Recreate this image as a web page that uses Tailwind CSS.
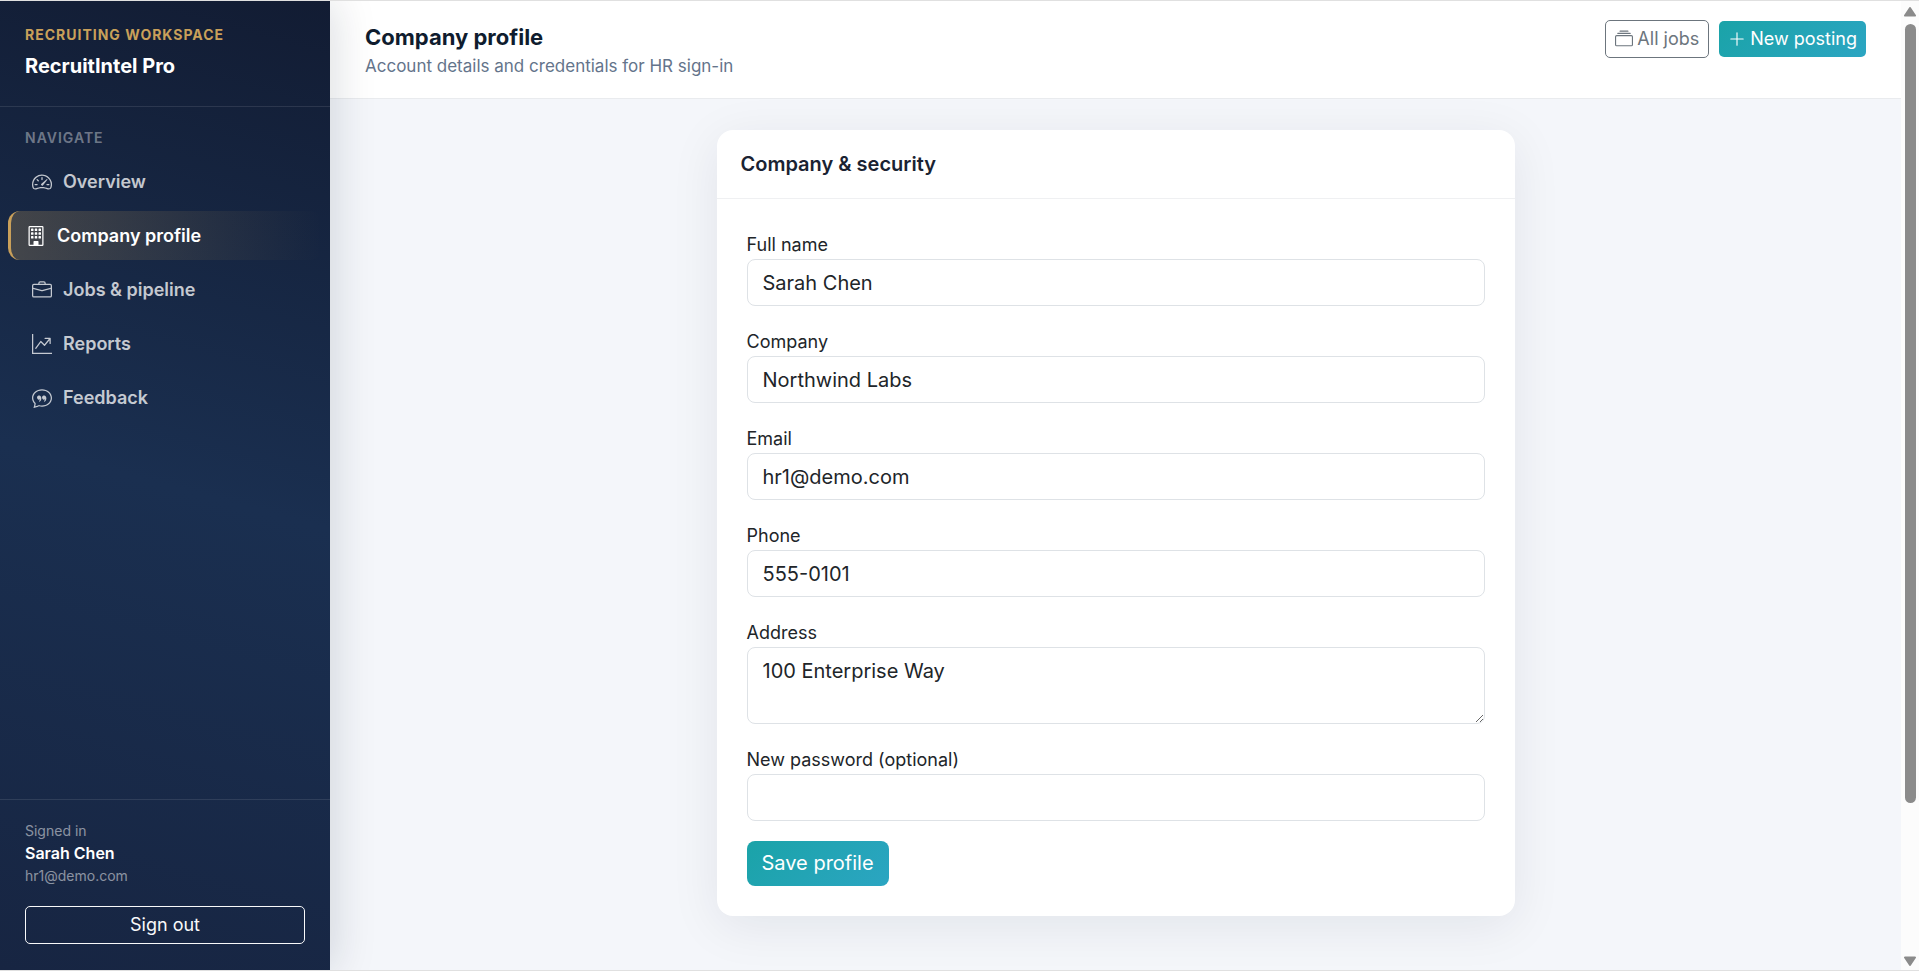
<!DOCTYPE html>
<html lang="en">
<head>
<meta charset="utf-8">
<title>Company profile - RecruitIntel Pro</title>
<meta name="viewport" content="width=device-width, initial-scale=1">
<script src="https://cdn.jsdelivr.net/npm/@tailwindcss/browser@4"></script>
</head>
<body class="flex min-h-screen border-y border-[#e0e0e0] bg-[#f4f6fa] font-['Inter',sans-serif] text-xl text-[#212529]">

<aside class="relative z-10 flex w-[330px] shrink-0 flex-col bg-[linear-gradient(195deg,#121c33_0%,#1a2f50_50%,#172542_100%)] text-white shadow-[4px_0_40px_rgba(15,28,46,0.15)]">
  <div class="border-b border-white/10 px-[25px] pt-[23px] pb-[27px]">
    <p class="text-sm leading-[22px] font-bold tracking-[1px] text-[#c9a05a]">RECRUITING WORKSPACE</p>
    <p class="pt-[7px] text-xl leading-[26px] font-bold">RecruitIntel Pro</p>
  </div>
  <nav class="flex-1 pt-5">
    <p class="px-[25px] pb-[9px] text-sm leading-[21px] font-semibold tracking-[1px] text-white/40">NAVIGATE</p>
    <ul class="flex flex-col gap-[5px] px-2 text-lg font-semibold text-white/75">
      <li><a href="#" class="flex items-center gap-[11px] px-6 py-[10px] leading-[29px]">
        <svg class="size-5" viewBox="0 0 16 16" fill="currentColor"><path d="M8 4a.5.5 0 0 1 .5.5V6a.5.5 0 0 1-1 0V4.5A.5.5 0 0 1 8 4M3.732 5.732a.5.5 0 0 1 .707 0l.915.914a.5.5 0 1 1-.708.708l-.914-.915a.5.5 0 0 1 0-.707M2 10a.5.5 0 0 1 .5-.5h1.586a.5.5 0 0 1 0 1H2.5A.5.5 0 0 1 2 10m9.5 0a.5.5 0 0 1 .5-.5h1.5a.5.5 0 0 1 0 1H12a.5.5 0 0 1-.5-.5m.754-4.246a.39.39 0 0 0-.527-.02L7.547 9.31a.91.91 0 1 0 1.302 1.258l3.434-4.297a.39.39 0 0 0-.029-.518z"/><path fill-rule="evenodd" d="M0 10a8 8 0 1 1 15.547 2.661c-.442 1.253-1.845 1.602-2.932 1.25C11.309 13.488 9.475 13 8 13c-1.474 0-3.31.488-4.615.911-1.087.352-2.49.003-2.932-1.25A8 8 0 0 1 0 10m8-7a7 7 0 0 0-6.603 9.329c.203.575.923.876 1.68.63C4.397 12.533 6.358 12 8 12s3.604.532 4.923.96c.757.245 1.477-.056 1.68-.631A7 7 0 0 0 8 3"/></svg>
        Overview</a></li>
      <li><a href="#" aria-current="page" class="flex items-center gap-[11px] rounded-xl border-l-3 border-[#c9a05a] bg-linear-to-r from-[#c9a05a]/25 to-transparent px-[15px] py-[10px] leading-[29px] text-white">
        <svg class="size-5" viewBox="0 0 16 16" fill="currentColor"><path d="M4 2.500a.5.5 0 0 1 .5-.5h1a.5.5 0 0 1 .5.5v1a.5.5 0 0 1-.5.5h-1a.5.5 0 0 1-.5-.5zm3 0a.5.5 0 0 1 .5-.5h1a.5.5 0 0 1 .5.5v1a.5.5 0 0 1-.5.5h-1a.5.5 0 0 1-.5-.5zm3.500-.5a.5.5 0 0 0-.5.5v1a.5.5 0 0 0 .5.5h1a.5.5 0 0 0 .5-.5v-1a.5.5 0 0 0-.5-.5zM4 5.500a.5.5 0 0 1 .5-.5h1a.5.5 0 0 1 .5.5v1a.5.5 0 0 1-.5.5h-1a.5.5 0 0 1-.5-.5zM7.500 5a.5.5 0 0 0-.5.5v1a.5.5 0 0 0 .5.5h1a.5.5 0 0 0 .5-.5v-1a.5.5 0 0 0-.5-.5zm2.500.5a.5.5 0 0 1 .5-.5h1a.5.5 0 0 1 .5.5v1a.5.5 0 0 1-.5.5h-1a.5.5 0 0 1-.5-.5zM4.500 8a.5.5 0 0 0-.5.5v1a.5.5 0 0 0 .5.5h1a.5.5 0 0 0 .5-.5v-1a.5.5 0 0 0-.5-.5zm2.500.5a.5.5 0 0 1 .5-.5h1a.5.5 0 0 1 .5.5v1a.5.5 0 0 1-.5.5h-1a.5.5 0 0 1-.5-.5zm3.500-.5a.5.5 0 0 0-.5.5v1a.5.5 0 0 0 .5.5h1a.5.5 0 0 0 .5-.5v-1a.5.5 0 0 0-.5-.5z"/><path d="M2 1a1 1 0 0 1 1-1h10a1 1 0 0 1 1 1v14a1 1 0 0 1-1 1H3a1 1 0 0 1-1-1zm11 0H3v14h3v-2.500a.5.5 0 0 1 .5-.5h3a.5.5 0 0 1 .5.5V15h3z"/></svg>
        Company profile</a></li>
      <li><a href="#" class="flex items-center gap-[11px] px-6 py-[10px] leading-[29px]">
        <svg class="size-5" viewBox="0 0 16 16" fill="currentColor"><path d="M6.500 1A1.500 1.500 0 0 0 5 2.500V3H1.500A1.500 1.500 0 0 0 0 4.500v8A1.500 1.500 0 0 0 1.500 14h13a1.500 1.500 0 0 0 1.500-1.500v-8A1.500 1.500 0 0 0 14.500 3H11v-.5A1.500 1.500 0 0 0 9.500 1zm0 1h3a.5.5 0 0 1 .5.5V3H6v-.5a.5.5 0 0 1 .5-.5m1.886 6.914L15 7.151V12.500a.5.5 0 0 1-.5.5h-13a.5.5 0 0 1-.5-.5V7.150l6.614 1.764a1.500 1.500 0 0 0 .772 0M1.500 4h13a.5.5 0 0 1 .5.5v1.616L8.129 7.948a.5.5 0 0 1-.258 0L1 6.116V4.500a.5.5 0 0 1 .5-.5"/></svg>
        Jobs &amp; pipeline</a></li>
      <li><a href="#" class="flex items-center gap-[11px] px-6 py-[10px] leading-[29px]">
        <svg class="size-5" viewBox="0 0 16 16" fill="currentColor"><path fill-rule="evenodd" d="M0 0h1v15h15v1H0zm10 3.500a.5.5 0 0 1 .5-.5h4a.5.5 0 0 1 .5.5v4a.5.5 0 0 1-1 0V4.900l-3.613 4.417a.5.5 0 0 1-.74.037L7.060 6.767l-3.656 5.027a.5.5 0 0 1-.808-.588l4-5.500a.5.5 0 0 1 .758-.06l2.609 2.610L13.445 4H10.500a.5.5 0 0 1-.5-.5"/></svg>
        Reports</a></li>
      <li><a href="#" class="flex items-center gap-[11px] px-6 py-[10px] leading-[29px]">
        <svg class="size-5" viewBox="0 0 16 16" fill="currentColor"><path d="M2.678 11.894a1 1 0 0 1 .287.801 11 11 0 0 1-.398 2c1.395-.323 2.247-.697 2.634-.893a1 1 0 0 1 .71-.074A8 8 0 0 0 8 14c3.996 0 7-2.807 7-6s-3.004-6-7-6-7 2.808-7 6c0 1.468.617 2.830 1.678 3.894m-.493 3.905a22 22 0 0 1-.713.129c-.2.032-.352-.176-.273-.362a10 10 0 0 0 .244-.637l.003-.01c.248-.72.45-1.548.524-2.319C.743 11.370 0 9.760 0 8c0-3.866 3.582-7 8-7s8 3.134 8 7-3.582 7-8 7a9 9 0 0 1-2.347-.306c-.52.263-1.639.742-3.468 1.105"/><path d="M7.066 6.760A1.665 1.665 0 0 0 4 7.668a1.667 1.667 0 0 0 2.561 1.406c-.131.389-.375.804-.777 1.220a.417.417 0 0 0 .6.58c1.486-1.540 1.293-3.214.682-4.112zm4 0A1.665 1.665 0 0 0 8 7.668a1.667 1.667 0 0 0 2.561 1.406c-.131.389-.375.804-.777 1.220a.417.417 0 0 0 .6.58c1.486-1.540 1.293-3.214.682-4.112z"/></svg>
        Feedback</a></li>
    </ul>
  </nav>
  <div class="border-t border-white/10 px-[25px] pt-5 pb-[26px]">
    <p class="text-sm leading-[22px] text-white/50">Signed in</p>
    <p class="text-base leading-[23px] font-semibold">Sarah Chen</p>
    <p class="text-sm leading-[22px] text-white/50">hr1@demo.com</p>
    <button type="button" class="mt-[19px] w-full rounded-[5px] border border-[#f8f9fa] py-[5px] text-lg leading-[26px] text-[#f8f9fa]">Sign out</button>
  </div>
</aside>

<div class="flex min-w-0 flex-1 flex-col">
  <header class="flex items-start justify-between gap-4 border-b border-[#e9ebee] bg-white px-[35px] pt-[19px] pb-[19px]">
    <div>
      <h1 class="text-[22px] leading-[34px] font-bold text-[#0f1c2e]">Company profile</h1>
      <p class="text-[17px] leading-[25px] text-[#64748b]">Account details and credentials for HR sign-in</p>
    </div>
    <div class="flex items-center gap-[10px]">
      <a href="#" class="flex items-center gap-1 rounded-[5px] border border-[#6c757d] px-[9px] py-[5px] text-lg leading-[26px] text-[#6c757d]">
        <svg class="size-[18px]" viewBox="0 0 16 16" fill="currentColor"><path d="M2.500 3.500a.5.5 0 0 1 0-1h11a.5.5 0 0 1 0 1zm2-2a.5.5 0 0 1 0-1h7a.5.5 0 0 1 0 1zM0 13a1.500 1.500 0 0 0 1.500 1.500h13A1.500 1.500 0 0 0 16 13V6a1.500 1.500 0 0 0-1.500-1.500h-13A1.500 1.500 0 0 0 0 6zm1.500.5A.5.5 0 0 1 1 13V6a.5.5 0 0 1 .5-.5h13a.5.5 0 0 1 .5.5v7a.5.5 0 0 1-.5.5z"/></svg>
        All jobs</a>
      <a href="#" class="flex items-center gap-1 rounded-[5px] bg-linear-135 from-[#1aa3a8] to-[#2ba5c2] px-[9px] py-[5px] text-lg leading-[26px] text-white">
        <svg class="size-[18px]" viewBox="0 0 16 16" fill="currentColor"><path fill-rule="evenodd" d="M8 2a.5.5 0 0 1 .5.5v5h5a.5.5 0 0 1 0 1h-5v5a.5.5 0 0 1-1 0v-5h-5a.5.5 0 0 1 0-1h5v-5A.5.5 0 0 1 8 2"/></svg>
        New posting</a>
    </div>
  </header>
  <main class="px-[35px] py-[31px]">
    <section class="mx-auto max-w-[798px] rounded-2xl bg-white shadow-[0_10px_50px_rgba(15,28,46,0.08)]">
      <h2 class="border-b border-[#eff0f2] px-6 py-5 text-xl leading-7 font-semibold text-[#1a2332]">Company &amp; security</h2>
      <form class="flex flex-col items-start gap-5 p-[30px]">
        <div class="flex w-full flex-col">
          <label for="name" class="pt-0.5 text-lg leading-7">Full name</label>
          <input id="name" type="text" value="Sarah Chen" class="w-full rounded-lg border border-[#dee2e6] bg-white px-[15px] pt-[9px] pb-[7px] leading-[29px]">
        </div>
        <div class="flex w-full flex-col">
          <label for="company" class="pt-0.5 text-lg leading-7">Company</label>
          <input id="company" type="text" value="Northwind Labs" class="w-full rounded-lg border border-[#dee2e6] bg-white px-[15px] pt-[9px] pb-[7px] leading-[29px]">
        </div>
        <div class="flex w-full flex-col">
          <label for="email" class="pt-0.5 text-lg leading-7">Email</label>
          <input id="email" type="email" value="hr1@demo.com" class="w-full rounded-lg border border-[#dee2e6] bg-white px-[15px] pt-[9px] pb-[7px] leading-[29px]">
        </div>
        <div class="flex w-full flex-col">
          <label for="phone" class="pt-0.5 text-lg leading-7">Phone</label>
          <input id="phone" type="tel" value="555-0101" class="w-full rounded-lg border border-[#dee2e6] bg-white px-[15px] pt-[9px] pb-[7px] leading-[29px]">
        </div>
        <div class="flex w-full flex-col">
          <label for="address" class="pt-0.5 text-lg leading-7">Address</label>
          <textarea id="address" rows="2" class="h-[77px] w-full rounded-lg border border-[#dee2e6] bg-white px-[15px] pt-[9px] pb-[7px] leading-[29px]">100 Enterprise Way</textarea>
        </div>
        <div class="flex w-full flex-col">
          <label for="password" class="pt-0.5 text-lg leading-7">New password (optional)</label>
          <input id="password" type="password" class="w-full rounded-lg border border-[#dee2e6] bg-white px-[15px] pt-[9px] pb-[7px] leading-[29px]">
        </div>
        <button type="submit" class="rounded-lg bg-linear-135 from-[#1aa3a8] to-[#2ba5c2] px-[15px] py-2 leading-[29px] text-white">Save profile</button>
      </form>
    </section>
  </main>
</div>

<div aria-hidden="true" class="flex w-[18px] shrink-0 flex-col items-center bg-[#fcfcfc] pt-[6px] pb-1 text-[#8b8b8b]">
  <svg class="h-[10px] w-3" viewBox="0 0 12 10" fill="currentColor"><path d="M5.200.5a1 1 0 0 1 1.600 0l5 7.500a1 1 0 0 1-.8 1.600H1A1 1 0 0 1 .2 8z"/></svg>
  <div class="mt-[7px] w-[11px] flex-[779] rounded-full bg-[#8b8b8b]"></div>
  <div class="flex-[153]"></div>
  <svg class="h-[10px] w-3" viewBox="0 0 12 10" fill="currentColor"><path d="M5.200 9.500a1 1 0 0 0 1.600 0l5-7.500a1 1 0 0 0-.8-1.600H1A1 1 0 0 0 .2 2z"/></svg>
</div>
</body>
</html>
